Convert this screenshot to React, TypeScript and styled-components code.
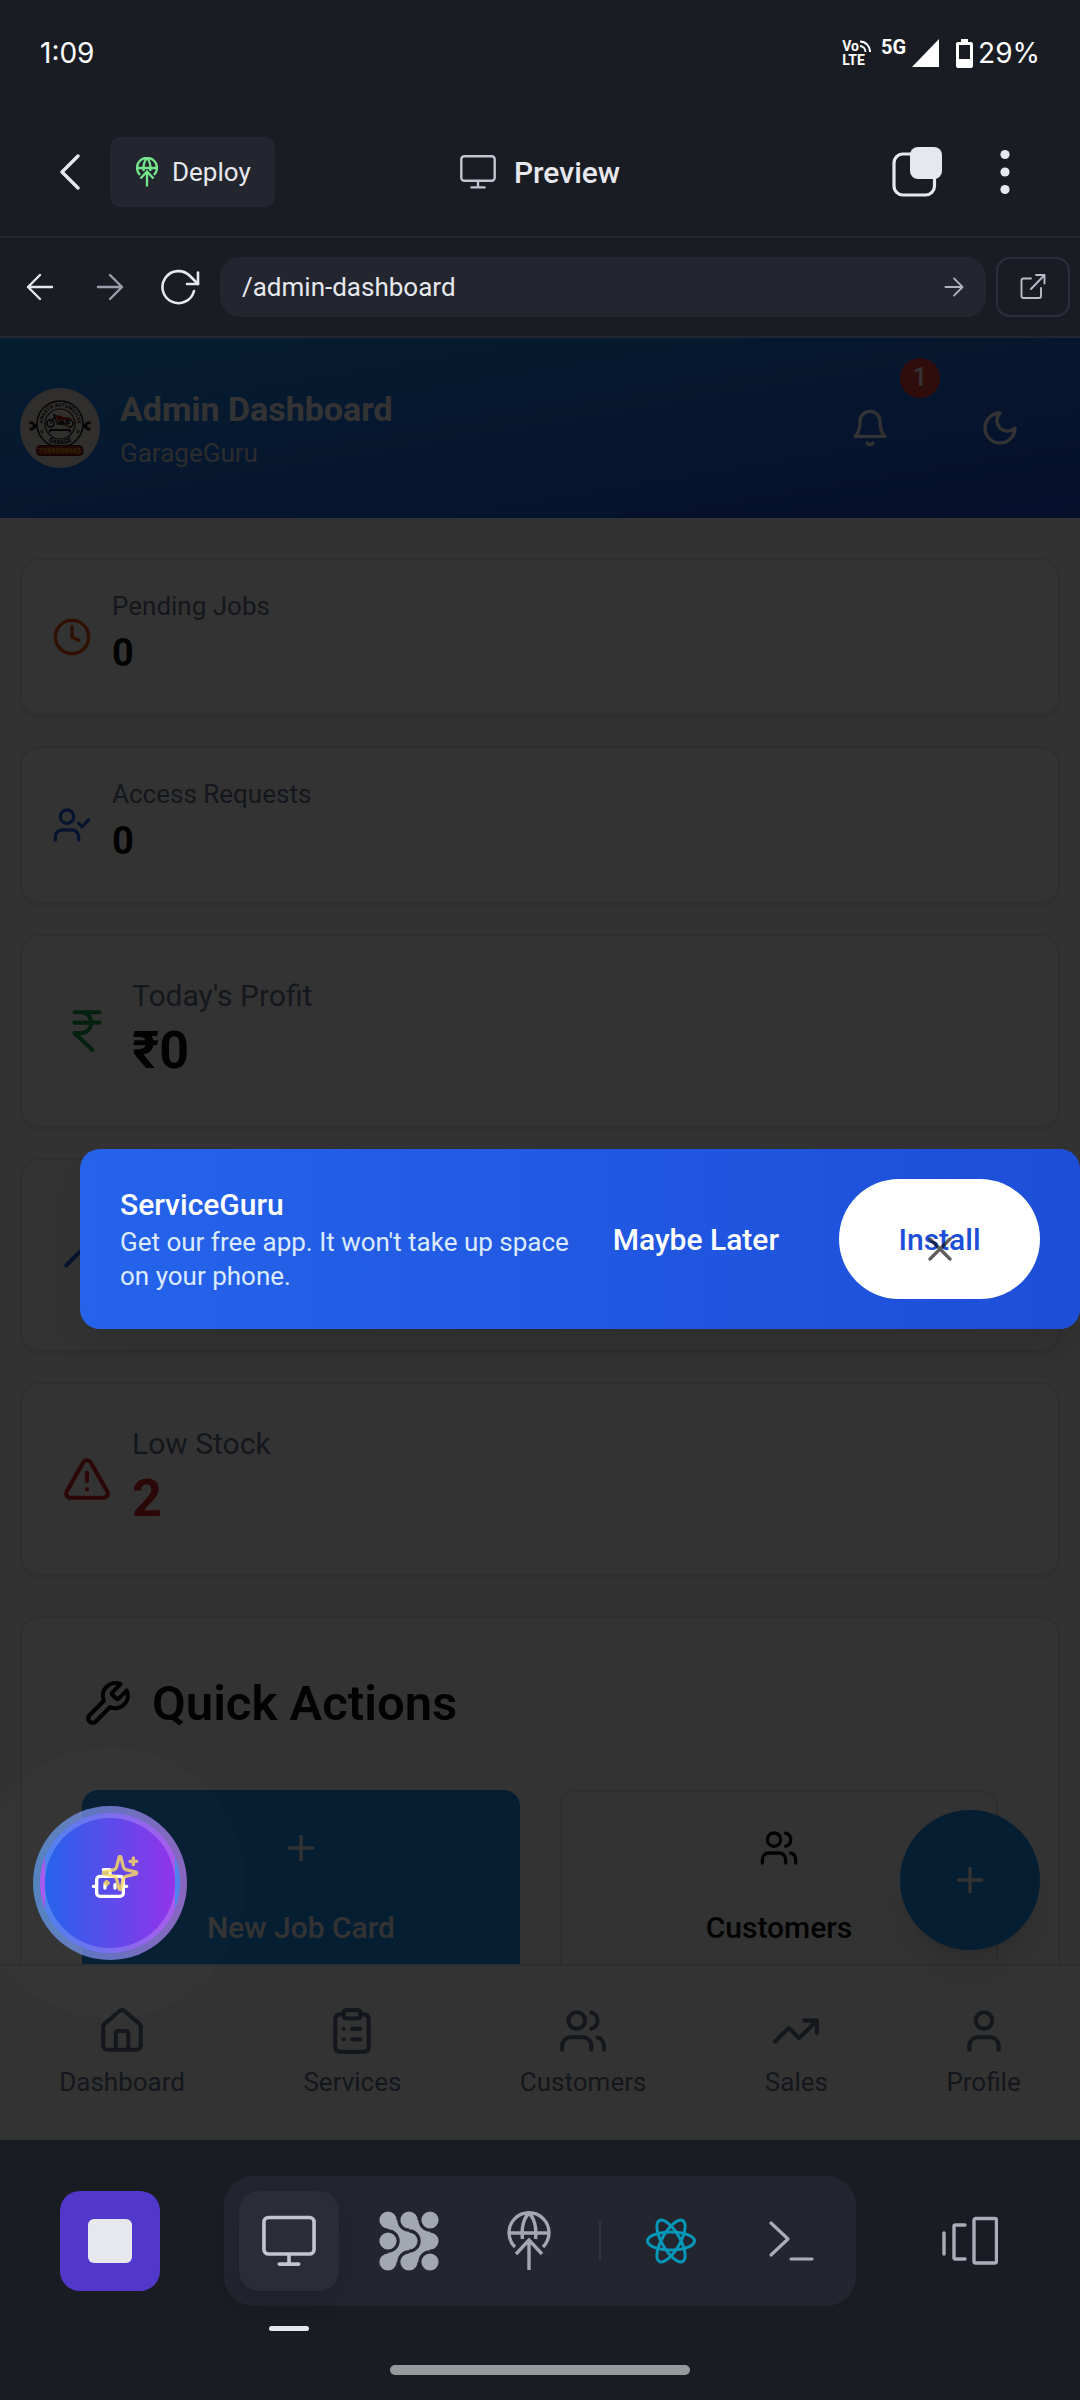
import React from "react";
import styled, { createGlobalStyle } from "styled-components";

const GlobalStyle = createGlobalStyle`
  *, *::before, *::after { box-sizing: border-box; }
  body { margin: 0; background: #1a1c24; }
  h1, h2, p { margin: 0; font-weight: inherit; }
  button, input { font: inherit; color: inherit; border: 0; padding: 0; margin: 0; background: none; }
  button { cursor: pointer; }
  a { color: inherit; text-decoration: none; }
  svg { display: block; flex: none; }
`;

/* ---------- icons ---------- */

type IconProps = {
  size?: number;
  width?: number;
  children: React.ReactNode;
};

const Icon = ({ size = 40, width = 2, children }: IconProps) => (
  <svg
    width={size}
    height={size}
    viewBox="0 0 24 24"
    fill="none"
    stroke="currentColor"
    strokeWidth={width}
    strokeLinecap="round"
    strokeLinejoin="round"
    aria-hidden="true"
  >
    {children}
  </svg>
);

type Sized = { size?: number };

const PlusIcon = () => <Icon><path d="M5 12h14M12 5v14" /></Icon>;
const CloseIcon = () => <Icon><path d="M18 6 6 18M6 6l12 12" /></Icon>;
const BellIcon = () => (
  <Icon>
    <path d="M6 8a6 6 0 0 1 12 0c0 7 3 9 3 9H3s3-2 3-9" />
    <path d="M10.3 21a1.94 1.94 0 0 0 3.4 0" />
  </Icon>
);
const MoonIcon = () => <Icon><path d="M12 3a6 6 0 0 0 9 9 9 9 0 1 1-9-9Z" /></Icon>;
const ClockIcon = () => (
  <Icon>
    <circle cx="12" cy="12" r="10" />
    <path d="M12 6v6l4 2" />
  </Icon>
);
const UserCheckIcon = () => (
  <Icon>
    <path d="M16 21v-2a4 4 0 0 0-4-4H6a4 4 0 0 0-4 4v2" />
    <circle cx="9" cy="7" r="4" />
    <path d="m16 11 2 2 4-4" />
  </Icon>
);
const RupeeIcon = () => (
  <Icon size={50}>
    <path d="M6 3h12M6 8h12M6 13l8.5 8M6 13h3M9 13c6.667 0 6.667-10 0-10" />
  </Icon>
);
const TrendIcon = () => (
  <Icon size={50}>
    <path d="m22 7-8.5 8.5-5-5L2 17" />
    <path d="M16 7h6v6" />
  </Icon>
);
const AlertIcon = () => (
  <Icon size={50}>
    <path d="m21.73 18-8-14a2 2 0 0 0-3.48 0l-8 14A2 2 0 0 0 4 21h16a2 2 0 0 0 1.73-3" />
    <path d="M12 9v4M12 17h.01" />
  </Icon>
);
const WrenchIcon = () => (
  <Icon size={50}>
    <path d="M14.7 6.3a1 1 0 0 0 0 1.4l1.6 1.6a1 1 0 0 0 1.4 0l3.77-3.77a6 6 0 0 1-7.94 7.94l-6.91 6.91a2.12 2.12 0 0 1-3-3l6.91-6.91a6 6 0 0 1 7.94-7.94l-3.76 3.76z" />
  </Icon>
);
const UsersIcon = ({ size }: Sized) => (
  <Icon size={size}>
    <path d="M16 21v-2a4 4 0 0 0-4-4H6a4 4 0 0 0-4 4v2" />
    <circle cx="9" cy="7" r="4" />
    <path d="M22 21v-2a4 4 0 0 0-3-3.87M16 3.13a4 4 0 0 1 0 7.75" />
  </Icon>
);
const HouseIcon = () => (
  <Icon size={50}>
    <path d="M15 21v-8a1 1 0 0 0-1-1h-4a1 1 0 0 0-1 1v8" />
    <path d="M3 10a2 2 0 0 1 .709-1.528l7-5.999a2 2 0 0 1 2.582 0l7 5.999A2 2 0 0 1 21 10v9a2 2 0 0 1-2 2H5a2 2 0 0 1-2-2z" />
  </Icon>
);
const ClipboardIcon = () => (
  <Icon size={50}>
    <rect x="8" y="2" width="8" height="4" rx="1" />
    <path d="M16 4h2a2 2 0 0 1 2 2v14a2 2 0 0 1-2 2H6a2 2 0 0 1-2-2V6a2 2 0 0 1 2-2h2" />
    <path d="M12 11h4M12 16h4M8 11h.01M8 16h.01" />
  </Icon>
);
const UserIcon = () => (
  <Icon size={50}>
    <path d="M19 21v-2a4 4 0 0 0-4-4H9a4 4 0 0 0-4 4v2" />
    <circle cx="12" cy="7" r="4" />
  </Icon>
);
const BotIcon = () => (
  <Icon>
    <path d="M12 8V4H8" />
    <rect x="4" y="8" width="16" height="12" rx="2" />
    <path d="M2 14h2M20 14h2M15 13v2M9 13v2" />
  </Icon>
);
const SparklesIcon = () => (
  <Icon>
    <path d="M9.937 15.5A2 2 0 0 0 8.5 14.063l-6.135-1.582a.5.5 0 0 1 0-.962L8.5 9.936A2 2 0 0 0 9.937 8.5l1.582-6.135a.5.5 0 0 1 .963 0L14.063 8.5A2 2 0 0 0 15.5 9.937l6.135 1.581a.5.5 0 0 1 0 .964L15.5 14.063a2 2 0 0 0-1.437 1.437l-1.582 6.135a.5.5 0 0 1-.963 0z" />
    <path d="M20 3v4M22 5h-4M4 17v2M5 18H3" />
  </Icon>
);

const MonitorIcon = ({ size = 36 }: Sized) => (
  <svg width={size} height={size} viewBox="0 0 36 36" fill="none" stroke="#c2c5cf" strokeWidth="2.4" strokeLinecap="round" aria-hidden="true">
    <rect x="1.3" y="2.3" width="33.4" height="24.4" rx="3" />
    <path d="M18 27v6M11.5 33.4h13" />
  </svg>
);

const GlobeUpIcon = ({ width, height, stroke }: { width: number; height: number; stroke: number }) => (
  <svg width={width} height={height} viewBox="0 0 44 60" fill="none" stroke="currentColor" strokeWidth={stroke} aria-hidden="true">
    <path d="M8 36A20 20 0 1 1 36 36M2 22h40M15.500 28C14 17 17 6 22 2.500C27 6 30 17 28.500 28" />
    <path d="M22 59V29M9 43l13-14 13 14" />
  </svg>
);

const BackIcon = () => (
  <svg width="20" height="36" viewBox="0 0 20 36" fill="none" stroke="#e6e8ee" strokeWidth="3.4" strokeLinecap="round" strokeLinejoin="round" aria-hidden="true">
    <path d="M18 2 2 18l16 16" />
  </svg>
);

const TabsIcon = () => (
  <svg width="50" height="50" viewBox="0 0 50 50" aria-hidden="true">
    <rect x="2" y="7" width="40.500" height="41" rx="9" fill="none" stroke="#e6e8ee" strokeWidth="3.2" />
    <rect x="18" y="0" width="32" height="32" rx="8" fill="#e6e8ee" />
  </svg>
);

const DotsIcon = () => (
  <svg width="10" height="46" viewBox="0 0 10 46" fill="#e6e8ee" aria-hidden="true">
    <circle cx="5" cy="5.500" r="4.600" />
    <circle cx="5" cy="23" r="4.600" />
    <circle cx="5" cy="40.500" r="4.600" />
  </svg>
);

const ArrowIcon = ({ back, size = 28, stroke = 2.4 }: { back?: boolean; size?: number; stroke?: number }) => (
  <svg width={size} height={size} viewBox="0 0 28 28" fill="none" stroke="currentColor" strokeWidth={stroke} strokeLinecap="round" strokeLinejoin="round" aria-hidden="true">
    <path d={back ? "M26 14H2M14 2 2 14l12 12" : "M2 14h24M14 2l12 12-12 12"} />
  </svg>
);

const ReloadIcon = () => (
  <svg width="40" height="40" viewBox="0 0 40 40" fill="none" stroke="#e6e8ee" strokeWidth="2.600" strokeLinecap="round" strokeLinejoin="round" aria-hidden="true">
    <path d="M34 24A16 16 0 1 1 30 9l8 8" />
    <path d="M38 5.500V17H27" />
  </svg>
);

const ExternalIcon = () => (
  <svg width="28" height="28" viewBox="0 0 28 28" fill="none" stroke="#b9bcc7" strokeWidth="1.900" strokeLinecap="round" strokeLinejoin="round" aria-hidden="true">
    <path d="M12 5.500H4.500a2 2 0 0 0-2 2V23a2 2 0 0 0 2 2H20a2 2 0 0 0 2-2V15" />
    <path d="M12 16 25.500 2M17 2h8.500v8.500" />
  </svg>
);

/* Two chains of linked dots, each link tapered by the circles beside it. */
const link = "M18.300 9A11.700 11.700 0 0 0 30 20.700V30H20.700A11.700 11.700 0 0 0 9 18.300V9Z";

const AgentIcon = () => (
  <svg width="60" height="60" viewBox="0 0 60 60" fill="currentColor" aria-hidden="true">
    {[9, 30, 51].map((y) => [9, 30, 51].map((x) => <circle key={x + "-" + y} cx={x} cy={y} r="8.600" />))}
    <path d={link} />
    <path d={link} transform="translate(21 0)" />
    <path d={link} transform="translate(0 60) scale(1 -1)" />
    <path d={link} transform="translate(21 60) scale(1 -1)" />
  </svg>
);

const ReactIcon = () => (
  <svg width="50" height="50" viewBox="0 0 50 50" fill="none" stroke="#0797b8" strokeWidth="3" aria-hidden="true">
    {[0, 60, 120].map((a) => <ellipse key={a} cx="25" cy="25" rx="23.500" ry="9" transform={`rotate(${a} 25 25)`} />)}
  </svg>
);

const TerminalIcon = () => (
  <svg width="46" height="42" viewBox="0 0 46 42" fill="none" stroke="#a9adb8" strokeWidth="3.200" strokeLinecap="round" strokeLinejoin="round" aria-hidden="true">
    <path d="m3 3 17 16L3 35M23 39h21" />
  </svg>
);

const PanelsIcon = () => (
  <svg width="56" height="50" viewBox="0 0 56 50" fill="none" stroke="#a9adb8" strokeWidth="3.400" strokeLinecap="round" strokeLinejoin="round" aria-hidden="true">
    <path d="M2 17v21M23 9H13.500a1.500 1.500 0 0 0-1.500 1.500v31A1.500 1.500 0 0 0 13.500 43H23" />
    <rect x="32" y="2.500" width="22.500" height="44.500" rx="1.800" />
  </svg>
);

const GarageLogo = () => (
  <svg width="80" height="80" viewBox="0 0 80 80" role="img" aria-label="Garage logo">
    <circle cx="40" cy="40" r="40" fill="#f3ecdf" />
    <path d="M9.500 33.500h3l4 3v3l-4 3h-3v-2.800h3v-3.400h-3zM70.500 33.500h-3l-4 3v3l4 3h3v-2.800h-3v-3.400h3z" fill="#1a1a1a" />
    <circle cx="40" cy="36" r="23" fill="#f3ecdf" stroke="#1a1a1a" strokeWidth="1.600" />
    <circle cx="40" cy="36" r="15" fill="none" stroke="#1a1a1a" strokeWidth="1.200" />
    <defs>
      <path id="logo-top" d="M24 42.500A17.300 17.300 0 1 1 56 42.500" />
      <path id="logo-bottom" d="M20.500 43.500A21 21 0 0 0 59.500 43.500" />
    </defs>
    <text fontFamily="Roboto, sans-serif" fontWeight="900" fontSize="5" fill="#1a1a1a" textAnchor="middle">
      <textPath href="#logo-top" startOffset="50%">ANARTH AUTOMOTIVE</textPath>
    </text>
    <text fontFamily="Roboto, sans-serif" fontWeight="900" fontSize="6.500" fill="#1a1a1a" textAnchor="middle">
      <textPath href="#logo-bottom" startOffset="50%">GARAGE</textPath>
    </text>
    <g fill="none" stroke="#1a1a1a">
      <circle cx="22" cy="43.500" r="1.200" />
      <circle cx="58" cy="43.500" r="1.200" />
      <circle cx="30.500" cy="35.500" r="3.600" strokeWidth="1.600" />
      <circle cx="49.500" cy="35.500" r="3.600" strokeWidth="1.600" />
      <path d="M30.500 35.500l4-7 3 7.500h8l4-.5M33 26.500l4 1.500M45 31l5 4" strokeWidth="1.400" />
    </g>
    <path d="M35.500 28.500c2-1.500 5-1.500 7 .5l9 .5-3 2.500-11 .5z" fill="#b02418" />
    <path d="M38 32.500h6l1 4-6 .5z" fill="#3a3020" />
    <path d="M43 37.500h7v1.200h-7z" fill="#d79a20" />
    <path d="M29.500 41h21l1 3.500h-2l-1-1.500h-17l-1 1.500h-2z" fill="#1a1a1a" />
    <rect x="16.500" y="57.500" width="46.500" height="10" rx="4" fill="#a8231b" stroke="#3a1410" />
    <text x="39.800" y="65.200" fontFamily="Roboto, sans-serif" fontWeight="700" fontSize="7.400" fill="#f0b323" textAnchor="middle">7288656665</text>
  </svg>
);

/* ---------- shell ---------- */

const Shell = styled.div`
  display: flex;
  flex-direction: column;
  height: 100vh;
  overflow: hidden;
  background: #1a1c24;
  color: #e6e8ee;
  font-family: Roboto, "Liberation Sans", sans-serif;
`;

const StatusBar = styled.div`
  display: flex;
  justify-content: space-between;
  align-items: center;
  height: 80px;
  padding: 26px 40px 0;
  color: #fff;
  font-family: Inter, Roboto, sans-serif;
  font-size: 28px;
  line-height: 36px;
`;

const StatusGroup = styled.div`
  display: flex;
  align-items: center;
`;

const Volte = styled.span`
  display: flex;
  flex-direction: column;
  margin-right: 10px;
  font: 700 14px/14px Roboto, sans-serif;
`;

const VolteRow = styled.span`
  display: flex;
  align-items: center;
  gap: 1px;
`;

const FiveG = styled.span`
  align-self: flex-start;
  margin-right: 6px;
  font: 700 20px/24px Roboto, sans-serif;
`;

const Battery = styled.span`
  display: flex;
  align-items: center;
  gap: 5px;
  margin-left: 17px;
`;

const TopBar = styled.header`
  display: grid;
  grid-template-columns: 1fr auto 1fr;
  align-items: center;
  height: 158px;
  padding: 28px 60px 0;
  border-bottom: 2px solid #242731;
`;

const TopGroup = styled.div<{ $end?: boolean }>`
  display: flex;
  align-items: center;
  justify-content: ${(p) => (p.$end ? "flex-end" : "flex-start")};
  gap: ${(p) => (p.$end ? "48px" : "30px")};
`;

const PlainButton = styled.button<{ $w?: number; $h?: number; $color?: string }>`
  display: inline-flex;
  align-items: center;
  justify-content: center;
  width: ${(p) => (p.$w ? p.$w + "px" : "auto")};
  height: ${(p) => (p.$h ? p.$h + "px" : "auto")};
  color: ${(p) => p.$color || "inherit"};
`;

const DeployButton = styled.button`
  display: inline-flex;
  align-items: center;
  gap: 14px;
  height: 70px;
  padding: 0 24px 0 26px;
  border-radius: 10px;
  background: #23262f;
  color: #76e68c;
  font-size: 26px;

  span { color: #e6e8ee; }
`;

const PreviewTitle = styled.h1`
  display: flex;
  align-items: center;
  gap: 18px;
  font-size: 30px;
  font-weight: 500;
`;

const AddressBar = styled.form`
  display: flex;
  align-items: center;
  height: 100px;
  padding: 0 10px 0 5px;
  border-bottom: 2px solid #242731;
`;

const NavButtons = styled.div`
  display: flex;
  width: 210px;
  margin-right: 5px;

  button { flex: 1; height: 60px; }
`;

const UrlBox = styled.div`
  display: flex;
  flex: 1;
  align-items: center;
  height: 60px;
  margin-right: 10px;
  padding: 0 22px;
  border-radius: 20px;
  background: #23262f;
  font-size: 26px;

  input { flex: 1; min-width: 0; outline: 0; }
`;

const ExternalButton = styled.button`
  display: grid;
  place-items: center;
  width: 74px;
  height: 60px;
  border: 2px solid #2c2f3b;
  border-radius: 14px;
`;

/* ---------- previewed app ---------- */

const Preview = styled.main`
  position: relative;
  display: flex;
  flex: 1;
  flex-direction: column;
  min-height: 0;
  overflow: hidden;
  background: #fafafa;
  color: #0c0a09;
`;

const AppScroll = styled.div`
  flex: 1;
  min-height: 0;
  overflow: hidden;
`;

const AppHeader = styled.header`
  display: flex;
  align-items: center;
  height: 180px;
  padding: 0 20px;
  background: linear-gradient(to bottom right, hsl(207, 90%, 54%), #1d4ed8);
  color: #fff;
`;

const HeaderText = styled.div`
  display: flex;
  flex: 1;
  flex-direction: column;
  gap: 4px;
  margin-left: 20px;
`;

const AppTitle = styled.h2`
  font-size: 34px;
  font-weight: 700;
  line-height: 46px;
`;

const AppSubtitle = styled.p`
  color: #d5d9df;
  font-size: 26px;
  line-height: 34px;
`;

const HeaderButton = styled.button<{ $w: number }>`
  position: relative;
  display: grid;
  place-items: center;
  width: ${(p) => p.$w}px;
  height: 100px;
  margin-left: 20px;
`;

const Badge = styled.span`
  position: absolute;
  top: -20px;
  right: -20px;
  width: 40px;
  height: 40px;
  border-radius: 50%;
  background: #ef4444;
  font-size: 26px;
  font-weight: 500;
  line-height: 38px;
  text-align: center;
`;

const Stack = styled.div`
  display: flex;
  flex-direction: column;
  gap: 30px;
  padding: 40px 20px;
`;

const cardFrame = `
  border: 2px solid #e6e7e9;
  border-radius: 20px;
  background: #fff;
  box-shadow: 0 3px 6px rgba(0, 0, 0, 0.07);
`;

const StatCard = styled.section<{ $large?: boolean; $tone: string }>`
  ${cardFrame}
  display: flex;
  align-items: center;
  gap: 20px;
  height: ${(p) => (p.$large ? 194 : 158)}px;
  padding: 0 ${(p) => (p.$large ? 40 : 30)}px;
  color: ${(p) => p.$tone};
`;

const StatLabel = styled.p<{ $large?: boolean }>`
  color: #64748b;
  font-size: ${(p) => (p.$large ? 30 : 26)}px;
  line-height: ${(p) => (p.$large ? 40 : 32)}px;
`;

const StatValue = styled.p<{ $large?: boolean; $tone?: string }>`
  color: ${(p) => p.$tone || "#0c0a09"};
  font-size: ${(p) => (p.$large ? 52 : 38)}px;
  font-weight: 700;
  line-height: ${(p) => (p.$large ? 70 : 62)}px;
`;

const ActionsCard = styled.section`
  ${cardFrame}
  margin-top: 10px;
  padding: 60px;
`;

const ActionsTitle = styled.h2`
  display: flex;
  align-items: center;
  gap: 20px;
  margin-bottom: 60px;
  font-size: 49px;
  font-weight: 600;
  line-height: 52px;
`;

const ActionGrid = styled.div`
  display: grid;
  grid-template-columns: 1fr 1fr;
  gap: 40px;
`;

const ActionButton = styled.button<{ $primary?: boolean }>`
  display: flex;
  flex-direction: column;
  align-items: center;
  justify-content: center;
  gap: 40px;
  height: 196px;
  border: 2px solid ${(p) => (p.$primary ? "hsl(207, 90%, 54%)" : "#e6e7e9")};
  border-radius: 16px;
  background: ${(p) => (p.$primary ? "hsl(207, 90%, 54%)" : "#fff")};
  color: ${(p) => (p.$primary ? "#fff" : "#0c0a09")};
  font-size: 30px;
  font-weight: 500;
  line-height: 40px;
`;

const BottomNav = styled.nav`
  display: flex;
  justify-content: space-around;
  height: 176px;
  padding-top: 40px;
  border-top: 2px solid #e6e7e9;
  background: #fff;
`;

const NavLink = styled.a`
  display: flex;
  flex-direction: column;
  align-items: center;
  gap: 8px;
  color: #64748b;
  font-size: 26px;
  line-height: 36px;
`;

const AddFab = styled.button`
  position: absolute;
  right: 40px;
  bottom: 190px;
  display: grid;
  place-items: center;
  width: 140px;
  height: 140px;
  border-radius: 50%;
  background: hsl(207, 90%, 54%);
  box-shadow: 0 25px 38px -8px rgba(0, 0, 0, 0.12), 0 10px 15px -10px rgba(0, 0, 0, 0.1);
  color: #fff;
`;

const Overlay = styled.div`
  position: absolute;
  inset: 0;
  background: rgba(0, 0, 0, 0.8);
`;

const InstallBanner = styled.aside`
  position: absolute;
  top: calc(50% - 90px);
  right: 0;
  left: 80px;
  display: flex;
  align-items: center;
  height: 180px;
  padding: 0 40px;
  border-radius: 20px;
  background: linear-gradient(to right, #2563eb, #1d4ed8);
  box-shadow: 0 25px 38px -8px rgba(0, 0, 0, 0.12);
  color: #fff;
  font-size: 30px;
  font-weight: 500;
`;

const BannerText = styled.div`
  flex: 1;
`;

const BannerTitle = styled.h2`
  font-size: 30px;
  font-weight: 500;
  line-height: 40px;
`;

const BannerBody = styled.p`
  color: #dbeafe;
  font-size: 26px;
  font-weight: 400;
  line-height: 34px;
`;

const LaterButton = styled.button`
  margin: 0 60px 0 40px;
`;

const InstallButton = styled.button`
  width: 201px;
  height: 120px;
  border-radius: 60px;
  background: #fff;
  color: #1d4ed8;
`;

const CloseButton = styled.button`
  position: absolute;
  right: 120px;
  bottom: 60px;
  width: 40px;
  height: 40px;
  color: #0c0a09;
  opacity: 0.65;
`;

const AssistantGlow = styled.div`
  position: absolute;
  bottom: 121px;
  left: -26px;
  width: 272px;
  height: 272px;
  border-radius: 50%;
  background: rgba(160, 175, 205, 0.015);
`;

const AssistantRing = styled.div`
  position: absolute;
  bottom: 180px;
  left: 33px;
  display: grid;
  place-items: center;
  width: 154px;
  height: 154px;
  border-radius: 50%;
  background: linear-gradient(to right, rgba(96, 165, 250, 0.7), rgba(192, 132, 252, 0.7));
`;

const AssistantButton = styled.button`
  position: relative;
  display: grid;
  place-items: center;
  width: 140px;
  height: 140px;
  border: 5px solid rgba(255, 255, 255, 0.2);
  border-radius: 50%;
  background: linear-gradient(to right, #2563eb, #9333ea);
  color: #fff;
`;

const Spark = styled.span`
  position: absolute;
  top: 35px;
  right: 35px;
  color: #fddf60;
  opacity: 0.8;
`;

/* ---------- dock ---------- */

const Dock = styled.footer`
  display: flex;
  flex-direction: column;
  align-items: center;
  height: 260px;
  padding-top: 36px;
`;

const DockRow = styled.div`
  display: flex;
  align-self: stretch;
  align-items: center;
  justify-content: space-between;
  padding: 0 60px;
`;

const StopButton = styled.button`
  display: grid;
  place-items: center;
  width: 100px;
  height: 100px;
  border-radius: 20px;
  background: #5138cb;
`;

const StopGlyph = styled.span`
  width: 44px;
  height: 44px;
  border-radius: 6px;
  background: #e6e8ee;
`;

const DockPanel = styled.div`
  display: flex;
  align-items: center;
  gap: 20px;
  height: 130px;
  padding: 15px;
  border-radius: 30px;
  background: #23262f;
  color: #a2a7b2;
`;

const DockItem = styled.button<{ $active?: boolean }>`
  position: relative;
  display: grid;
  place-items: center;
  width: 100px;
  height: 100px;
  border-radius: 20px;
  background: ${(p) => (p.$active ? "#2a2c38" : "transparent")};
  box-shadow: ${(p) => (p.$active ? "0 8px 20px rgba(20, 20, 30, 0.3)" : "none")};
`;

const ActiveMark = styled.span`
  position: absolute;
  bottom: -40px;
  left: 30px;
  width: 40px;
  height: 5px;
  border-radius: 3px;
  background: #e6e8ee;
`;

const DockDivider = styled.span`
  width: 2px;
  height: 40px;
  background: #31343f;
`;

const HomeHandle = styled.div`
  width: 300px;
  height: 10px;
  margin-top: 59px;
  border-radius: 5px;
  background: #98999c;
`;

/* ---------- data ---------- */

type Stat = {
  id: string;
  label?: string;
  value?: string;
  tone: string;
  valueTone?: string;
  icon: React.ReactNode;
  large?: boolean;
};

const stats: Stat[] = [
  { id: "jobs", label: "Pending Jobs", value: "0", tone: "#ea580c", icon: <ClockIcon /> },
  { id: "requests", label: "Access Requests", value: "0", tone: "#2563eb", icon: <UserCheckIcon /> },
  { id: "today", label: "Today's Profit", value: "₹0", tone: "#16a34a", icon: <RupeeIcon />, large: true },
  { id: "trend", tone: "#2563eb", icon: <TrendIcon />, large: true },
  { id: "stock", label: "Low Stock", value: "2", tone: "#dc2626", valueTone: "#dc2626", icon: <AlertIcon />, large: true },
];

const tabs = [
  { label: "Dashboard", icon: <HouseIcon /> },
  { label: "Services", icon: <ClipboardIcon /> },
  { label: "Customers", icon: <UsersIcon size={50} /> },
  { label: "Sales", icon: <TrendIcon /> },
  { label: "Profile", icon: <UserIcon /> },
];

export default function App() {
  return (
    <Shell>
      <GlobalStyle />
      <StatusBar>
        <span>1:09</span>
        <StatusGroup>
          <Volte>
            <VolteRow>
              <span>Vo</span>
              <svg width="11" height="12" viewBox="0 0 11 12" fill="none" stroke="#fff" strokeWidth="2" aria-hidden="true">
                <path d="M0 1.500A10 10 0 0 1 10 12M0 6A6 6 0 0 1 5.500 12" />
              </svg>
            </VolteRow>
            <span>LTE</span>
          </Volte>
          <FiveG>5G</FiveG>
          <svg width="27" height="28" viewBox="0 0 27 28" fill="#fff" aria-hidden="true"><path d="M27 0v28H0z" /></svg>
          <Battery>
            <svg width="17" height="29" viewBox="0 0 17 29" aria-hidden="true">
              <path d="M5 0h7v3h3a2 2 0 0 1 2 2v22a2 2 0 0 1-2 2H2a2 2 0 0 1-2-2V5a2 2 0 0 1 2-2h3z" fill="#fff" />
              <path d="M3 6h11v14H3z" fill="#1a1c24" />
            </svg>
            <span>29%</span>
          </Battery>
        </StatusGroup>
      </StatusBar>

      <TopBar>
        <TopGroup>
          <PlainButton $w={20} $h={70} aria-label="Back"><BackIcon /></PlainButton>
          <DeployButton>
            <GlobeUpIcon width={22} height={30} stroke={4.6} />
            <span>Deploy</span>
          </DeployButton>
        </TopGroup>
        <PreviewTitle><MonitorIcon />Preview</PreviewTitle>
        <TopGroup $end>
          <PlainButton aria-label="Tabs"><TabsIcon /></PlainButton>
          <PlainButton $w={30} $h={70} aria-label="More options"><DotsIcon /></PlainButton>
        </TopGroup>
      </TopBar>

      <AddressBar onSubmit={(e) => e.preventDefault()}>
        <NavButtons>
          <PlainButton type="button" aria-label="Go back"><ArrowIcon back /></PlainButton>
          <PlainButton type="button" aria-label="Go forward" $color="#9b9fac"><ArrowIcon /></PlainButton>
          <PlainButton type="button" aria-label="Reload"><ReloadIcon /></PlainButton>
        </NavButtons>
        <UrlBox>
          <input aria-label="Page path" defaultValue="/admin-dashboard" />
          <PlainButton aria-label="Open path" $color="#b0b3be"><ArrowIcon size={20} stroke={2.6} /></PlainButton>
        </UrlBox>
        <ExternalButton type="button" aria-label="Open in new tab"><ExternalIcon /></ExternalButton>
      </AddressBar>

      <Preview>
        <AppScroll>
          <AppHeader>
            <GarageLogo />
            <HeaderText>
              <AppTitle>Admin Dashboard</AppTitle>
              <AppSubtitle>GarageGuru</AppSubtitle>
            </HeaderText>
            <HeaderButton $w={100} aria-label="Notifications"><BellIcon /><Badge>1</Badge></HeaderButton>
            <HeaderButton $w={120} aria-label="Dark mode"><MoonIcon /></HeaderButton>
          </AppHeader>
          <Stack>
            {stats.map((s) => (
              <StatCard key={s.id} $large={s.large} $tone={s.tone}>
                {s.icon}
                {s.label && (
                  <div>
                    <StatLabel $large={s.large}>{s.label}</StatLabel>
                    <StatValue $large={s.large} $tone={s.valueTone}>{s.value}</StatValue>
                  </div>
                )}
              </StatCard>
            ))}
            <ActionsCard>
              <ActionsTitle><WrenchIcon />Quick Actions</ActionsTitle>
              <ActionGrid>
                <ActionButton $primary><PlusIcon />New Job Card</ActionButton>
                <ActionButton><UsersIcon />Customers</ActionButton>
              </ActionGrid>
            </ActionsCard>
          </Stack>
        </AppScroll>
        <BottomNav>
          {tabs.map((t) => (
            <NavLink key={t.label} href="#">{t.icon}{t.label}</NavLink>
          ))}
        </BottomNav>
        <AddFab aria-label="Add"><PlusIcon /></AddFab>
        <Overlay />
        <AssistantGlow />
        <AssistantRing>
          <AssistantButton aria-label="Assistant">
            <BotIcon />
            <Spark><SparklesIcon /></Spark>
          </AssistantButton>
        </AssistantRing>
        <InstallBanner>
          <BannerText>
            <BannerTitle>ServiceGuru</BannerTitle>
            <BannerBody>Get our free app. It won't take up space on your phone.</BannerBody>
          </BannerText>
          <LaterButton>Maybe Later</LaterButton>
          <InstallButton>Install</InstallButton>
          <CloseButton aria-label="Close"><CloseIcon /></CloseButton>
        </InstallBanner>
      </Preview>

      <Dock>
        <DockRow>
          <StopButton aria-label="Stop"><StopGlyph /></StopButton>
          <DockPanel>
            <DockItem $active aria-label="Preview"><MonitorIcon size={54} /><ActiveMark /></DockItem>
            <DockItem aria-label="Agent"><AgentIcon /></DockItem>
            <DockItem aria-label="Deployments"><GlobeUpIcon width={44} height={60} stroke={3.4} /></DockItem>
            <DockDivider />
            <DockItem aria-label="React"><ReactIcon /></DockItem>
            <DockItem aria-label="Shell"><TerminalIcon /></DockItem>
          </DockPanel>
          <PlainButton $w={100} $h={100} aria-label="Switch panels"><PanelsIcon /></PlainButton>
        </DockRow>
        <HomeHandle />
      </Dock>
    </Shell>
  );
}
